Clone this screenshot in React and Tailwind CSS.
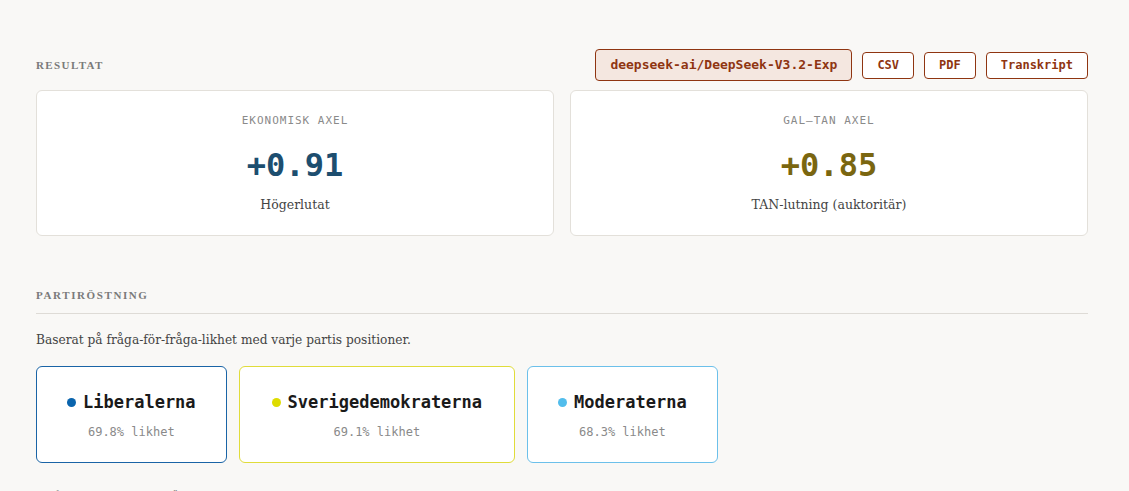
import React from "react";

function AxisCard({ label, value, color, subtitle }) {
  return (
    <div className="flex-1 rounded-[6px] border border-[#e3e0da] bg-white pt-[22px] pb-[21px] flex flex-col items-center">
      <div className="font-['DejaVu_Sans_Mono',monospace] text-[11px] leading-[16px] tracking-[1px] text-[#8a8a8a]">{label}</div>
      <div className={`mt-[16px] font-['DejaVu_Sans_Mono',monospace] font-bold text-[32px] leading-[40px] ${color}`}>{value}</div>
      <div className="mt-[11px] font-['DejaVu_Serif',serif] text-[12.5px] leading-[18px] text-[#444]">{subtitle}</div>
    </div>
  );
}

function PartyCard({ name, pct, border, dot, px }) {
  return (
    <div className={`rounded-[6px] border ${border} ${px} bg-white pt-[23px] pb-[21px] flex flex-col items-center`}>
      <div className="flex items-center gap-[7px]">
        <span className={`w-[9px] h-[9px] rounded-full ${dot}`} />
        <span className="font-['DejaVu_Sans_Mono',monospace] font-bold text-[17px] leading-[24px] text-[#1a1a1a]">{name}</span>
      </div>
      <div className="mt-[9px] font-['DejaVu_Sans_Mono',monospace] text-[12px] leading-[18px] text-[#8a8a8a]">{pct}</div>
    </div>
  );
}

export default function App() {
  return (
    <div className="h-[491px] overflow-hidden bg-[#f9f8f6] pl-[36px] pr-[41px] pt-[49px]">
      <div className="flex items-center justify-between">
        <div className="font-['Liberation_Serif',serif] font-bold text-[11px] tracking-[1.4px] text-[#7a7a7a]">RESULTAT</div>
        <div className="flex items-center gap-[10px]">
          <div className="rounded-[4px] border border-[#8f3511] bg-[#f4e7e0] px-[14px] py-[7px] font-['DejaVu_Sans_Mono',monospace] font-bold text-[13px] leading-[16px] text-[#8f3511]">deepseek-ai/DeepSeek-V3.2-Exp</div>
          <div className="rounded-[4px] border border-[#8f3511] bg-white px-[14px] py-[5px] font-['DejaVu_Sans_Mono',monospace] font-bold text-[12px] leading-[15px] text-[#8f3511]">CSV</div>
          <div className="rounded-[4px] border border-[#8f3511] bg-white px-[14px] py-[5px] font-['DejaVu_Sans_Mono',monospace] font-bold text-[12px] leading-[15px] text-[#8f3511]">PDF</div>
          <div className="rounded-[4px] border border-[#8f3511] bg-white px-[14px] py-[5px] font-['DejaVu_Sans_Mono',monospace] font-bold text-[12px] leading-[15px] text-[#8f3511]">Transkript</div>
        </div>
      </div>

      <div className="mt-[9px] flex gap-[16px]">
        <AxisCard label="EKONOMISK AXEL" value="+0.91" color="text-[#1d4e6f]" subtitle="Högerlutat" />
        <AxisCard label="GAL–TAN AXEL" value="+0.85" color="text-[#7a6610]" subtitle="TAN-lutning (auktoritär)" />
      </div>

      <div className="mt-[51px] border-b border-[#dedbd6] pb-[10px] font-['Liberation_Serif',serif] font-bold text-[11px] leading-[16px] tracking-[1.6px] text-[#7a7a7a]">PARTIRÖSTNING</div>
      <div className="mt-[16px] font-['DejaVu_Serif',serif] text-[12.2px] leading-[20px] text-[#444]">Baserat på fråga-för-fråga-likhet med varje partis positioner.</div>

      <div className="mt-[16px] flex gap-[12px]">
        <PartyCard name="Liberalerna" pct="69.8% likhet" border="border-[#1a64a6]" dot="bg-[#0a64ad]" px="px-[30px]" />
        <PartyCard name="Sverigedemokraterna" pct="69.1% likhet" border="border-[#e0dc3a]" dot="bg-[#dedc00]" px="px-[32px]" />
        <PartyCard name="Moderaterna" pct="68.3% likhet" border="border-[#6cc0ea]" dot="bg-[#52bdec]" px="px-[30px]" />
      </div>

      <div className="mt-[24px] font-['Liberation_Serif',serif] font-bold text-[11px] leading-[16px] tracking-[1.6px] text-[#7a7a7a]">FRÅGOR OCH SVAR ÖVERSIKT</div>
    </div>
  );
}
